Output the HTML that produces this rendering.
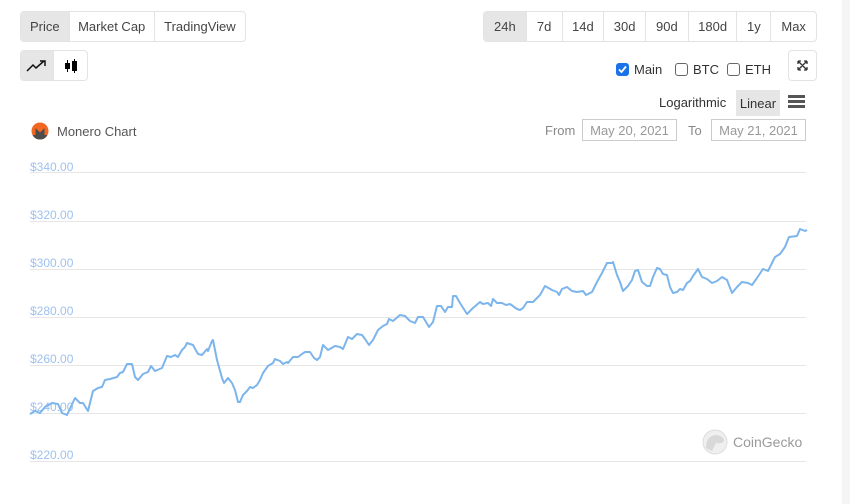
<!DOCTYPE html>
<html><head><meta charset="utf-8"><style>
*{box-sizing:border-box;margin:0;padding:0}
body{width:850px;height:504px;background:#fff;font-family:"Liberation Sans",sans-serif;position:relative;overflow:hidden;color:#333}
.strip{position:absolute;left:842px;top:0;width:8px;height:504px;background:#f5f5f5}
.grp{position:absolute;display:flex;border:1px solid #e3e3e3;border-radius:4px;overflow:hidden;height:31px}
.grp div{display:flex;align-items:center;justify-content:center;font-size:13px;border-right:1px solid #e3e3e3;color:#444}
.grp div:last-child{border-right:none}
.act{background:#e6e6e6}
.t{position:absolute;font-size:13px;white-space:nowrap}
.cb{display:inline-block;width:13px;height:13px;border:1px solid #666;border-radius:3px;vertical-align:-2px;margin-right:5px}
.inp{position:absolute;border:1px solid #ccc;height:22px;font-size:13px;color:#999;display:flex;align-items:center;justify-content:center}
</style></head><body>
<div class="strip"></div>
<div class="grp" style="left:20px;top:11px;width:226px">
<div class="act" style="width:49px">Price</div><div style="width:86px">Market Cap</div><div style="width:91px">TradingView</div></div>
<div class="grp" style="left:20px;top:50px;width:68px;height:31px">
<div class="act" style="width:34px"><svg width="22" height="14" viewBox="0 0 22 14"><path d="M1 12 L7 6 L10 9 L18 2 M14 2 H19 V7" fill="none" stroke="#111" stroke-width="1.5"/></svg></div>
<div style="width:34px"><svg width="14" height="16" viewBox="0 0 14 16"><line x1="3.5" y1="2" x2="3.5" y2="14" stroke="#000"/><rect x="1" y="5" width="5" height="6" fill="#000"/><line x1="10.5" y1="1" x2="10.5" y2="15" stroke="#000"/><rect x="8" y="3" width="5" height="10" fill="#000"/></svg></div></div>
<div class="grp" style="left:483px;top:11px;width:334px">
<div class="act" style="width:43px">24h</div><div style="width:36px">7d</div><div style="width:42px">14d</div><div style="width:42px">30d</div><div style="width:43px">90d</div><div style="width:49px">180d</div><div style="width:34px">1y</div><div style="width:45px">Max</div></div>
<div class="t" style="left:616px;top:62px"><span class="cb" style="background:#1a73e8;border-color:#1a73e8;position:relative"><svg width="11" height="11" style="position:absolute;left:0;top:0" viewBox="0 0 11 11"><path d="M2 5.5 L4.5 8 L9 2.5" stroke="#fff" stroke-width="1.8" fill="none"/></svg></span>Main</div>
<div class="t" style="left:675px;top:62px"><span class="cb"></span>BTC</div>
<div class="t" style="left:727px;top:62px"><span class="cb"></span>ETH</div>
<div style="position:absolute;left:788px;top:50px;width:29px;height:31px;border:1px solid #e3e3e3;border-radius:4px"><svg width="27" height="29" viewBox="0 0 27 29"><path d="M9 10 L18 19 M18 10 L9 19 M9 10 h3 M9 10 v3 M18 10 h-3 M18 10 v3 M9 19 h3 M9 19 v-3 M18 19 h-3 M18 19 v-3" stroke="#333" stroke-width="1.3" fill="none"/></svg></div>
<div class="t" style="left:659px;top:95px;color:#333">Logarithmic</div>
<div style="position:absolute;left:736px;top:90px;width:44px;height:26px;background:#e6e6e6;font-size:13px;display:flex;align-items:center;justify-content:center">Linear</div>
<div style="position:absolute;left:788px;top:95px;width:17px"><div style="height:3px;background:#555;margin-bottom:2px"></div><div style="height:3px;background:#555;margin-bottom:2px"></div><div style="height:3px;background:#555"></div></div>
<svg style="position:absolute;left:31px;top:122px" width="18" height="18" viewBox="0 0 18 18"><circle cx="9" cy="9" r="8.5" fill="#f26822"/><path d="M1.5 13 H4.5 V6 L9 10.5 L13.5 6 V13 H16.5 A8.5 8.5 0 0 1 1.5 13Z" fill="#4c4c4c"/></svg>
<div class="t" style="left:57px;top:124px;color:#555">Monero Chart</div>
<div class="t" style="left:545px;top:123px;color:#888">From</div>
<div class="inp" style="left:582px;top:119px;width:95px">May 20, 2021</div>
<div class="t" style="left:688px;top:123px;color:#888">To</div>
<div class="inp" style="left:711px;top:119px;width:95px">May 21, 2021</div>
<svg style="position:absolute;left:0;top:0" width="850" height="504">
<g stroke="#e6e6e6" stroke-width="1">
<line x1="30" y1="172.5" x2="806" y2="172.5"/><line x1="30" y1="221.5" x2="806" y2="221.5"/><line x1="30" y1="269.5" x2="806" y2="269.5"/><line x1="30" y1="317.5" x2="806" y2="317.5"/><line x1="30" y1="365.5" x2="806" y2="365.5"/><line x1="30" y1="413.5" x2="806" y2="413.5"/><line x1="30" y1="461.5" x2="806" y2="461.5"/></g>
<g fill="#9ec1ef" font-family="Liberation Sans" font-size="12">
<text x="30" y="171">$340.00</text><text x="30" y="219">$320.00</text><text x="30" y="267">$300.00</text><text x="30" y="315">$280.00</text><text x="30" y="363">$260.00</text><text x="30" y="411">$240.00</text><text x="30" y="459">$220.00</text></g>
<polyline fill="none" stroke="#7cb5ec" stroke-width="2" stroke-linejoin="round" points="30,414 35,411 40,413 45,407 52,403 58,404 62,413 67,415 75,398 80,403 83,403 88,411 93,391 98,388 102,387 105,380 110,379 117,377 120,373 123,372 127,364 132,364 135,377 138,380 143,374 148,372 151,366 155,371 162,368 167,356 171,357 175,355 178,357 182,350 185,347 187,343 190,344 193,345 198,354 202,355 207,349 208,351 212,341 213,340 217,360 222,378 224,383 228,378 232,383 235,390 238,402 240,402 243,395 247,391 250,387 253,388 257,385 260,380 263,373 268,366 273,363 275,359 280,361 283,364 287,362 288,363 293,357 298,357 302,354 305,352 310,352 314,358 317,360 320,357 323,345 328,350 335,346 340,347 343,349 348,337 352,339 357,334 362,335 365,339 369,345 373,340 378,330 383,326 387,324 389,319 393,321 400,315 405,316 410,321 415,323 418,317 420,317 423,317 429,327 433,322 437,306 441,306 445,312 448,307 452,307 453,296 456,296 460,303 467,314 473,308 480,302 483,304 488,303 491,306 493,299 497,303 502,303 506,305 510,304 517,309 520,310 523,308 527,302 533,302 540,295 545,286 552,290 557,292 559,295 562,289 567,287 572,291 577,292 583,291 586,295 592,292 597,282 602,273 607,263 612,263 613,262 617,275 620,282 623,291 628,286 632,280 635,271 638,270 642,282 647,286 650,286 653,277 657,268 660,269 663,274 667,275 670,287 673,293 677,292 680,289 683,290 687,283 690,281 693,276 698,269 702,277 707,279 712,283 717,281 722,277 727,280 732,293 737,287 742,282 748,283 752,285 757,278 763,269 768,271 775,257 780,254 785,247 789,237 797,236 800,229 805,231 807,230"/>
<circle cx="715" cy="442" r="12" fill="#efefef" stroke="#ddd"/>
<path d="M706 448 Q706 436 716 435 Q724 436 724 441 Q722 444 716 443 Q714 447 712 451Z" fill="#d8d8d8"/>
<text x="733" y="447" fill="#9a9a9a" font-family="Liberation Sans" font-size="14">CoinGecko</text>
</svg>
</body></html>
